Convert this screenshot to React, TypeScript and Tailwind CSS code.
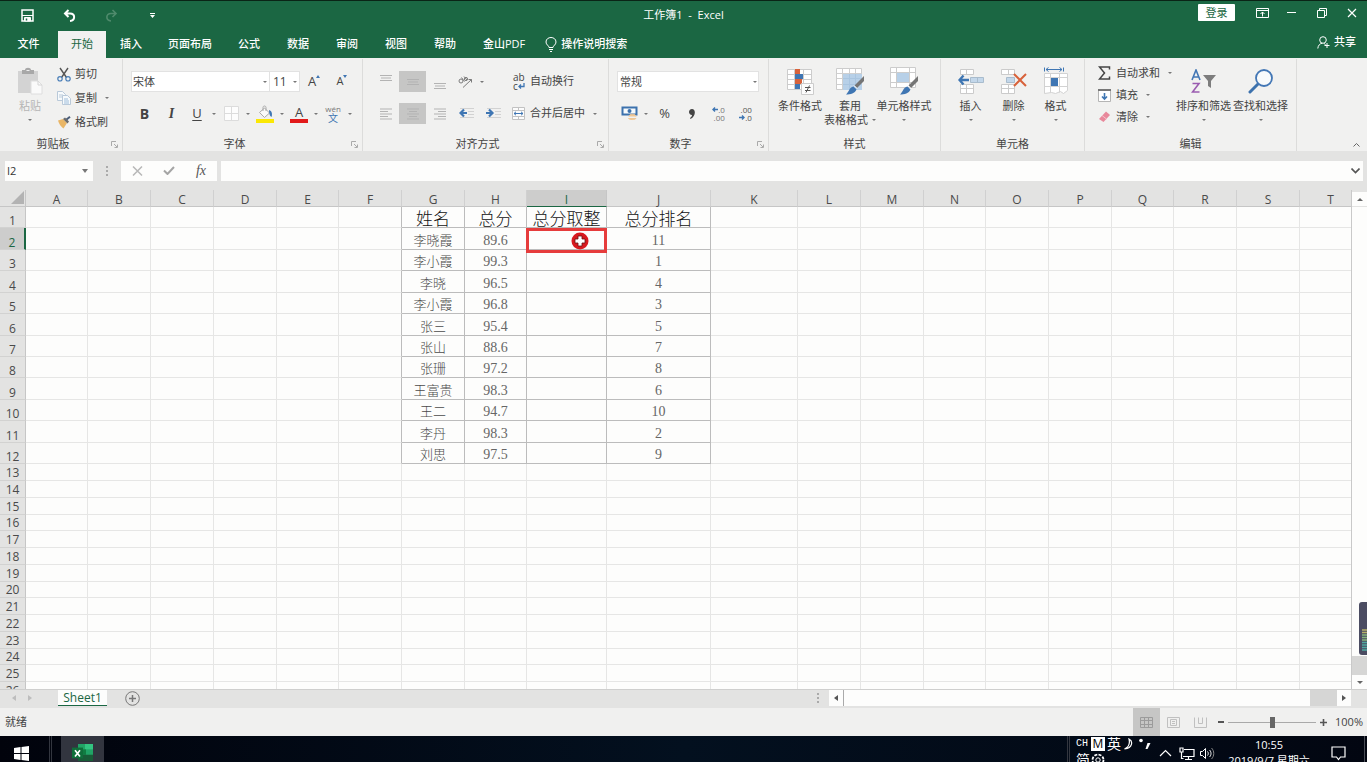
import type { ReactNode } from "react";
import clsx from "clsx";

const TABS = ["插入", "页面布局", "公式", "数据", "审阅", "视图", "帮助", "金山PDF"];

const COLUMNS = [
  { name: "A", width: "w-[62px]" },
  { name: "B", width: "w-[63px]" },
  { name: "C", width: "w-[63px]" },
  { name: "D", width: "w-[63px]" },
  { name: "E", width: "w-[62px]" },
  { name: "F", width: "w-[63px]" },
  { name: "G", width: "w-[63px]" },
  { name: "H", width: "w-[62px]" },
  { name: "I", width: "w-[80px]" },
  { name: "J", width: "w-[104px]" },
  { name: "K", width: "w-[87px]" },
  { name: "L", width: "w-[63px]" },
  { name: "M", width: "w-[63px]" },
  { name: "N", width: "w-[62px]" },
  { name: "O", width: "w-[63px]" },
  { name: "P", width: "w-[63px]" },
  { name: "Q", width: "w-[62px]" },
  { name: "R", width: "w-[63px]" },
  { name: "S", width: "w-[63px]" },
  { name: "T", width: "w-[62px]" },
];

const DATA: Record<string, string>[] = [
  { G: "姓名", H: "总分", I: "总分取整", J: "总分排名" },
  { G: "李晓霞", H: "89.6", J: "11" },
  { G: "李小霞", H: "99.3", J: "1" },
  { G: "李晓", H: "96.5", J: "4" },
  { G: "李小霞", H: "96.8", J: "3" },
  { G: "张三", H: "95.4", J: "5" },
  { G: "张山", H: "88.6", J: "7" },
  { G: "张珊", H: "97.2", J: "8" },
  { G: "王富贵", H: "98.3", J: "6" },
  { G: "王二", H: "94.7", J: "10" },
  { G: "李丹", H: "98.3", J: "2" },
  { G: "刘思", H: "97.5", J: "9" },
];

const ROWS = Array.from({ length: 26 }, (_, i) => i + 1);
const TALL_ROWS = [2, 4, 6, 9, 11];

function rowHeight(row: number) {
  if (row <= 12) return TALL_ROWS.includes(row) ? "h-[22px]" : "h-[21px]";
  return (row - 13) % 4 === 3 ? "h-[16px]" : "h-[17px]";
}

/* ---------- small pieces ---------- */

function Caret({ className }: { className?: string }) {
  return (
    <svg width="4" height="2" viewBox="0 0 4 2" className={clsx("shrink-0", className)} aria-hidden>
      <path d="M0 0h4L2 2z" fill="#777" />
    </svg>
  );
}

function Group({ label, launcher, className, children }: { label: string; launcher?: boolean; className: string; children: ReactNode }) {
  return (
    <section className={clsx("flex shrink-0 flex-col border-r border-[#dcdcdb]", className)} aria-label={label}>
      <div className="flex-1">{children}</div>
      <div className="flex h-[14px] items-center">
        <span className="flex-1 text-center leading-[14px]">{label}</span>
        {launcher ? (
          <button className="flex w-4 justify-center" aria-label={`${label}设置`}>
            <svg width="7" height="7" viewBox="0 0 7 7" fill="none" stroke="#aaa">
              <path d="M.5 5V.5H5M3 3l3 3M6.500 3.500v3h-3" />
            </svg>
          </button>
        ) : null}
      </div>
    </section>
  );
}

function Tool({ label, active, className, children }: { label: string; active?: boolean; className?: string; children: ReactNode }) {
  return (
    <button
      aria-label={label}
      className={clsx("flex h-[21px] shrink-0 items-center justify-center", className ?? "w-[27px]", active && "bg-[#c6c6c5]")}
    >
      {children}
    </button>
  );
}

function SplitTool({ label, children }: { label: string; children: ReactNode }) {
  return (
    <button aria-label={label} className="flex h-[21px] w-[34px] shrink-0 items-center">
      <span className="flex w-6 justify-center">{children}</span>
      <span className="flex w-[10px] justify-center">
        <Caret />
      </span>
    </button>
  );
}

function BigTool({ icon, lines, className, muted }: { icon: ReactNode; lines: string[]; className: string; muted?: boolean }) {
  return (
    <button className={clsx("flex shrink-0 flex-col items-center pt-2 leading-[14px]", className, muted && "text-[#b5b5b5]")}>
      <span className="mb-1 flex h-7 items-center">{icon}</span>
      <span className="whitespace-nowrap">{lines[0]}</span>
      {lines[1] ? (
        <span className="flex items-center gap-1 whitespace-nowrap">
          {lines[1]}
          <Caret />
        </span>
      ) : (
        <span className="flex h-[14px] items-center">
          <Caret />
        </span>
      )}
    </button>
  );
}

function LabeledTool({ icon, text, caret, className }: { icon: ReactNode; text: string; caret?: boolean; className: string }) {
  return (
    <button className={clsx("flex items-center whitespace-nowrap", className)}>
      <span className="flex w-[18px] justify-start">{icon}</span>
      {text}
      {caret ? <Caret className="ml-2" /> : null}
    </button>
  );
}

function AlignLines({ widths, align, top }: { widths: number[]; align: "left" | "center" | "right"; top: number }) {
  return (
    <svg width="14" height="14" viewBox="0 0 14 14" stroke="#b3b3b3" aria-hidden>
      {widths.map((w, i) => {
        const x = align === "left" ? 1 : align === "right" ? 13 - w : 7 - w / 2;
        const y = top + i * 2.5;
        return <path key={i} d={`M${x} ${y}h${w}`} />;
      })}
    </svg>
  );
}

/* ---------- icons ---------- */

function PasteIcon() {
  return (
    <svg width="26" height="28" viewBox="0 0 26 28" aria-hidden>
      <path d="M1 4h20v22H1z" fill="#d3d3d3" />
      <path d="M5 3h3c0-3 6-3 6 0h3v4H5z" fill="#a8a8a8" />
      <path d="M9.500 3.500h3" stroke="#eee" />
      <path d="M14 14h7l4 4v9H14z" fill="#fafafa" stroke="#dedede" />
      <path d="M21 14v4h4" fill="none" stroke="#d4d4d4" />
    </svg>
  );
}

function CutIcon() {
  return (
    <svg width="14" height="15" viewBox="0 0 14 15" fill="none" aria-hidden>
      <path d="M3 1l6.500 9.500M11 1L4.500 10.500" stroke="#555" strokeWidth="1.400" />
      <circle cx="3" cy="11.800" r="2.200" stroke="#4a7fb8" strokeWidth="1.200" />
      <circle cx="11" cy="11.800" r="2.200" stroke="#4a7fb8" strokeWidth="1.200" />
    </svg>
  );
}

function CopyIcon() {
  return (
    <svg width="15" height="14" viewBox="0 0 15 14" fill="#f7fafc" stroke="#b9c9d9" aria-hidden>
      <path d="M.5.5h5l3 3v6h-8z" />
      <path d="M2 4h4M2 6h4" />
      <path d="M5.500 4.500h5l3 3v6h-8z" />
      <path d="M7 8h4M7 10h5M7 12h5" stroke="#9dbcda" />
    </svg>
  );
}

function PainterIcon() {
  return (
    <svg width="14" height="13" viewBox="0 0 14 13" aria-hidden>
      <path d="M1 4.500l5-1.500 4 4-3.500 5.500C4 11 2 8 1 4.500z" fill="#e9b667" />
      <path d="M6 3l4.500 4.500 1.500-2L8 1.500z" fill="#6b6b6b" />
      <path d="M9.500 3.500L13 .8" stroke="#4a5c78" strokeWidth="2" />
    </svg>
  );
}

function BordersIcon() {
  return (
    <svg width="15" height="15" viewBox="0 0 15 15" fill="#fdfdfd" stroke="#dcdcdc" aria-hidden>
      <path d="M.5.5h14v14H.5zM7.500.5v14M.5 7.500h14" />
    </svg>
  );
}

function FillIcon() {
  return (
    <svg width="18" height="18" viewBox="0 0 18 18" aria-hidden>
      <path d="M3.500 7.500L8.500 3l5 5-5 4.500z" fill="#fafafa" stroke="#aaa" />
      <path d="M7 6V2.500c0-2 3-2 3 0V6" fill="none" stroke="#aaa" />
      <path d="M13 5c3 1 3.500 4 2.500 7-2-1-2.500-4-2.500-7z" fill="#3f78b5" />
      <path d="M0 14h18v4H0z" fill="#fbe805" />
    </svg>
  );
}

function CurrencyIcon() {
  return (
    <svg width="17" height="15" viewBox="0 0 17 15" aria-hidden>
      <path d="M1.500 1.500h14v7h-14z" fill="#f7fafc" stroke="#3c72ad" strokeWidth="2" />
      <circle cx="8.500" cy="5" r="2" fill="#3c72ad" />
      <path d="M8 10.500c0-3 7-3 7 0M7.500 12c0 2 7.500 2 7.500 0" fill="#f0c795" stroke="#f0c795" />
    </svg>
  );
}

function IndentIcon({ right }: { right?: boolean }) {
  return (
    <svg width="16" height="13" viewBox="0 0 16 13" fill="none" aria-hidden>
      <path d="M1 1.500h14M9 4.500h6M9 7.500h6M1 10.500h14" stroke="#d2d2d2" />
      <path d={right ? "M0 6h6M3 2.500L6.500 6 3 9.500" : "M2 6h6M5 2.500L1.500 6 5 9.500"} stroke="#3f76b3" strokeWidth="2.200" />
    </svg>
  );
}

function OrientationIcon() {
  return (
    <svg width="15" height="14" viewBox="0 0 15 14" fill="none" stroke="#7c7c7c" aria-hidden>
      <circle cx="3" cy="6" r="2" />
      <path d="M3.500 2.500l3 4M6 1.500l3 3.500" />
      <circle cx="8" cy="4" r="1.600" />
      <path d="M5 12.500l8.500-8M10.500 4.500h3v3" />
    </svg>
  );
}

function MergeIcon() {
  return (
    <svg width="13" height="13" viewBox="0 0 13 13" fill="none" aria-hidden>
      <path d="M.5.5h12v12H.5zM.5 3.500h12M.5 9.500h12M6.500.5v3M6.500 9.500v3" fill="#fcfcfc" stroke="#c2c2c2" />
      <path d="M2 6.500h9M4 4.800L2 6.500l2 1.700M9 4.800l2 1.700-2 1.700" stroke="#3f76b3" />
    </svg>
  );
}

function ConditionalIcon() {
  return (
    <svg width="27" height="27" viewBox="0 0 27 27" aria-hidden>
      <path d="M.5 1.500h24v20H.5zM.5 6.500h24M.5 11.500h24M.5 16.500h24M7.500 1.500v20M16.500 1.500v20" fill="#fff" stroke="#cccccc" />
      <path d="M8 1h5v5H8zM8 11h7v5H8z" fill="#d8623b" />
      <path d="M8 6h8v5H8zM8 16h5v5H8z" fill="#3f76b3" />
      <path d="M14.500 15.500h12v11h-12z" fill="#fcfcfc" stroke="#ccc" />
      <path d="M18 19.500h5.500M18 22.500h5.500M22.500 17.500l-3.500 7" stroke="#555" />
    </svg>
  );
}

function StyleBrush() {
  return (
    <>
      <path d="M28 9L18.500 18.500l2.500 2.500L28 14z" fill="#757575" />
      <path d="M17.500 19.500l3 3c-1.500 4-6 5-10.500 5 3-2.500 3-7 7.500-8z" fill="#3f76b3" />
      <path d="M18 18.500l3 3" stroke="#fff" />
    </>
  );
}

function TableStyleIcon() {
  return (
    <svg width="28" height="28" viewBox="0 0 28 28" aria-hidden>
      <path d="M.5 1.500h25v21H.5z" fill="#fff" stroke="#cccccc" />
      <path d="M7 7h19v16H7z" fill="#b7d0e8" />
      <path d="M.5 6.500h25M.5 11.500h6M.5 17.500h6M6.500 1.500v21M13.500 1.500v5M19.500 1.500v5" stroke="#cfcfcf" />
      <path d="M7 11.500h18.500M7 17.500h18.500M13.500 7v15.500M19.500 7v15.500" stroke="#a9c5e0" />
      <StyleBrush />
    </svg>
  );
}

function CellStyleIcon() {
  return (
    <svg width="28" height="28" viewBox="0 0 28 28" aria-hidden>
      <path d="M.5.5h25v20H.5zM.5 5.500h25M.5 15.500h25M6.500.5v20M19.500.5v20" fill="#fff" stroke="#cccccc" />
      <path d="M7 6h12v9H7z" fill="#b7d0e8" />
      <StyleBrush />
    </svg>
  );
}

function InsertIcon() {
  return (
    <svg width="26" height="27" viewBox="0 0 26 27" aria-hidden>
      <path d="M2.500 1.500h13v5h-13zM8.500 1.500v5M2.500 16.500h13v9h-13zM2.500 20.500h13M8.500 16.500v9" fill="#fff" stroke="#cbcbcb" />
      <path d="M12.500 9.500h13v5h-13zM19.500 9.500v5" fill="#c3d7ea" stroke="#a9bccd" />
      <path d="M1.500 12H11M5.500 7.500L1.500 12l4 4.500" fill="none" stroke="#3f76b3" strokeWidth="2.400" />
    </svg>
  );
}

function DeleteIcon() {
  return (
    <svg width="27" height="27" viewBox="0 0 27 27" aria-hidden>
      <path d="M1.500 1.500h13v5h-13zM8.500 1.500v5M1.500 16.500h13v9h-13zM1.500 20.500h13M8.500 16.500v9" fill="#fff" stroke="#cbcbcb" />
      <path d="M6.500 9.500h8v5h-8z" fill="#c3d7ea" stroke="#a9bccd" />
      <path d="M14 6l12 12M26 6L14 18" stroke="#d8623b" strokeWidth="2" />
    </svg>
  );
}

function FormatIcon() {
  return (
    <svg width="24" height="28" viewBox="0 0 24 28" aria-hidden>
      <path d="M2 2.500h16M4.500.5L2 2.500l2.500 2M15.500.5L18 2.500l-2.500 2M.5.500v4M19.500.500v4" fill="none" stroke="#3f76b3" />
      <path d="M.5 6.500h23v17l-4 3-3-2-5 2-4-1-7 1zM.5 10.500h23M.5 19.500h23M6.500 6.500v19M15.500 6.500v19" fill="#fff" stroke="#d2d2d2" />
      <path d="M7 11h7v8H7z" fill="#3f76b3" />
    </svg>
  );
}

function SortFilterIcon() {
  return (
    <svg width="25" height="25" viewBox="0 0 25 25" fill="none" aria-hidden>
      <path d="M1 11L5 1l4 10M2.500 8h5" stroke="#4377b5" strokeWidth="1.600" />
      <path d="M1.500 14.500h6.500l-6.500 8.500h7" stroke="#9a5cb0" strokeWidth="1.600" />
      <path d="M12 6h13l-5 6v7l-3-2v-5z" fill="#7d7d7d" />
    </svg>
  );
}

function FindIcon() {
  return (
    <svg width="26" height="26" viewBox="0 0 26 26" aria-hidden>
      <path d="M10 16l-8 8" stroke="#3d72ad" strokeWidth="3" strokeLinecap="round" />
      <circle cx="16" cy="10" r="8" fill="#f8fafb" stroke="#4377b5" strokeWidth="1.800" />
    </svg>
  );
}

/* ---------- window parts ---------- */

function TitleBar() {
  return (
    <header className="flex h-[31px] shrink-0 border-t border-[#0a2416] bg-[#1b6743] text-white">
      <div className="flex flex-1 items-center pb-[2px]">
        <button className="ml-[6px] flex w-[42px] justify-center" aria-label="保存">
          <svg width="13" height="13" viewBox="0 0 13 13">
            <path d="M1 1h11v11H1z" fill="none" stroke="#fff" strokeWidth="1.500" />
            <path d="M1 6.500h11M3.500 8.500h6V12h-6z" fill="#fff" stroke="#fff" />
            <path d="M5.500 9.500v2" stroke="#1b6743" strokeWidth="1.500" />
          </svg>
        </button>
        <button className="flex w-[42px] justify-center" aria-label="撤消">
          <svg width="13" height="13" viewBox="0 0 13 13" fill="none" stroke="#fff" strokeWidth="2">
            <path d="M5.500 1L2 4.500 5.500 8M2 4.500h5c5.500 0 5.500 7 0 7.500" />
          </svg>
        </button>
        <button className="flex w-[42px] justify-center" aria-label="恢复">
          <svg width="13" height="13" viewBox="0 0 13 13" fill="none" stroke="#4f8a6c" strokeWidth="1.600">
            <path d="M7.500 1L11 4.500 7.500 8M11 4.500H6c-5.500 0-5.500 7 0 7.500" />
          </svg>
        </button>
        <button className="flex w-10 justify-center" aria-label="自定义快速访问工具栏">
          <svg width="5" height="5" viewBox="0 0 5 5" fill="#fff">
            <path d="M0 0h5v1H0zM0 2h5L2.500 5z" />
          </svg>
        </button>
      </div>
      <h1 className="self-center whitespace-pre pb-[2px] leading-4">工作簿1  -  Excel</h1>
      <div className="flex h-6 flex-1 items-center justify-end pb-px">
        <button className="mr-3 h-[17px] w-[37px] rounded-[1px] bg-white leading-[17px] text-[#1b6743]">登录</button>
        <button className="flex w-[30px] justify-center" aria-label="功能区显示选项">
          <svg width="13" height="10" viewBox="0 0 13 10" fill="none" stroke="#fff">
            <path d="M.5.500h12v9H.5zM.5 2.500h12M6.500 8.500V4M4.500 6l2-2 2 2" />
          </svg>
        </button>
        <button className="flex w-[30px] justify-center" aria-label="最小化">
          <svg width="10" height="9" viewBox="0 0 10 9" stroke="#fff">
            <path d="M0 4.500h9" />
          </svg>
        </button>
        <button className="flex w-[30px] justify-center" aria-label="向下还原">
          <svg width="10" height="10" viewBox="0 0 10 10" fill="none" stroke="#fff">
            <path d="M.5 2.500h7v7h-7zM2.500 2.500v-2h7v7h-2" />
          </svg>
        </button>
        <button className="flex w-[30px] justify-center" aria-label="关闭">
          <svg width="10" height="10" viewBox="0 0 10 10" stroke="#fff" strokeWidth="1.200">
            <path d="M1 1l8 8M9 1L1 9" />
          </svg>
        </button>
      </div>
    </header>
  );
}

function TabBar() {
  return (
    <nav className="flex h-[27px] shrink-0 items-stretch gap-px bg-[#1b6743] font-medium text-white">
      <button className="w-[57px]">文件</button>
      <button className="bg-[#f1f1f0] px-[13px] font-normal text-[#1b6743]">开始</button>
      {TABS.map((tab) => (
        <button key={tab} className={clsx("whitespace-nowrap", tab.length === 4 ? "px-3" : "px-[13px]")}>
          {tab}
        </button>
      ))}
      <button className="flex items-center gap-1 px-[6px]">
        <svg width="12" height="15" viewBox="0 0 12 15" fill="none" stroke="#fff">
          <path d="M4 10.500c0-2-3-2.500-3-5.500 0-6 10-6 10 0 0 3-3 3.500-3 5.500zM4 12.500h4M5 14.500h2" />
        </svg>
        操作说明搜索
      </button>
      <button className="ml-auto flex items-center gap-1 pb-1 pr-[11px]">
        <svg width="13" height="13" viewBox="0 0 13 13" fill="none" stroke="#fff">
          <circle cx="6" cy="4" r="3.300" />
          <path d="M.8 12.500c.3-3 2-5 4.500-5.300M7 7.500l1.500 1M10 7v5M7.500 9.500h5" />
        </svg>
        共享
      </button>
    </nav>
  );
}

function Ribbon() {
  return (
    <div className="flex h-[93px] shrink-0 bg-[#f1f1f0] pt-px text-[#444]">
      <Group label="剪贴板" launcher className="w-[123px]">
        <div className="flex">
          <BigTool icon={<PasteIcon />} lines={["粘贴"]} className="ml-1 w-[52px]" muted />
          <div className="flex flex-col items-start pl-px pt-[3px]">
            <LabeledTool icon={<CutIcon />} text="剪切" className="h-6" />
            <LabeledTool icon={<CopyIcon />} text="复制" caret className="h-6" />
            <LabeledTool icon={<PainterIcon />} text="格式刷" className="h-6" />
          </div>
        </div>
      </Group>

      <Group label="字体" launcher className="w-[240px]">
        <div className="flex flex-col gap-[11px] pl-2 pt-3">
          <div className="flex">
            <div className="relative w-[139px]">
              <select aria-label="字体名称" className="h-[21px] w-full appearance-none border border-[#e2e2e2] bg-white px-px pt-px">
                <option>宋体</option>
              </select>
              <Caret className="pointer-events-none absolute right-[3px] top-[10px]" />
            </div>
            <div className="relative w-[30px]">
              <select aria-label="字号" className="h-[21px] w-full appearance-none border border-l-0 border-[#e2e2e2] bg-white px-[3px] pt-px text-xs">
                <option>11</option>
              </select>
              <Caret className="pointer-events-none absolute right-[3px] top-[10px]" />
            </div>
            <Tool label="增大字号" className="w-7">
              <span className="text-[13px]">A</span>
              <svg width="4" height="3" viewBox="0 0 4 3" className="mt-1 self-start" fill="#3f76b3">
                <path d="M0 3h4L2 0z" />
              </svg>
            </Tool>
            <Tool label="减小字号" className="w-7">
              <span className="text-[11px]">A</span>
              <svg width="4" height="3" viewBox="0 0 4 3" className="mt-1 self-start" fill="#3f76b3">
                <path d="M0 0h4L2 3z" />
              </svg>
            </Tool>
          </div>
          <div className="flex text-sm">
            <Tool label="加粗">
              <b>B</b>
            </Tool>
            <Tool label="倾斜">
              <i className="font-['Liberation_Serif',serif] font-bold">I</i>
            </Tool>
            <SplitTool label="下划线">
              <span className="text-[13px] underline underline-offset-2">U</span>
            </SplitTool>
            <SplitTool label="边框">
              <BordersIcon />
            </SplitTool>
            <SplitTool label="填充颜色">
              <FillIcon />
            </SplitTool>
            <SplitTool label="字体颜色">
              <span className="flex w-[18px] flex-col items-center border-b-4 border-[#e21a1a] text-[13px] leading-[14px]">A</span>
            </SplitTool>
            <SplitTool label="拼音指南">
              <span className="flex flex-col items-center text-[8px] leading-[8px] text-[#777]">
                <span>wén</span>
                <span className="text-[10px] leading-[10px] text-[#3f76b3]">文</span>
              </span>
            </SplitTool>
          </div>
        </div>
      </Group>

      <Group label="对齐方式" launcher className="w-[246px]">
        <div className="flex flex-col gap-[11px] pl-[9px] pt-3">
          <div className="flex">
            <div className="flex w-[140px]">
              <Tool label="顶端对齐">
                <AlignLines widths={[12, 10, 12]} align="center" top={0.5} />
              </Tool>
              <Tool label="垂直居中" active>
                <AlignLines widths={[12, 10, 12]} align="center" top={4.5} />
              </Tool>
              <Tool label="底端对齐">
                <AlignLines widths={[12, 10, 12]} align="center" top={8.5} />
              </Tool>
              <SplitTool label="方向">
                <OrientationIcon />
              </SplitTool>
            </div>
            <LabeledTool
              icon={
                <span className="flex flex-col items-start pl-px text-[10px] leading-[9px]">
                  <span>ab</span>
                  <span className="flex items-center">
                    c
                    <svg width="7" height="6" viewBox="0 0 7 6" fill="none" stroke="#3f76b3" strokeWidth="1.300">
                      <path d="M6 0v3.500H1M3 1.500l-2 2 2 2" />
                    </svg>
                  </span>
                </span>
              }
              text="自动换行"
              className="h-[21px]"
            />
          </div>
          <div className="flex">
            <div className="flex w-[140px]">
              <Tool label="左对齐">
                <AlignLines widths={[12, 8, 12, 8, 12]} align="left" top={2} />
              </Tool>
              <Tool label="居中" active>
                <AlignLines widths={[12, 8, 12, 8, 12]} align="center" top={2} />
              </Tool>
              <Tool label="右对齐">
                <AlignLines widths={[12, 8, 12, 8, 12]} align="right" top={2} />
              </Tool>
              <Tool label="减少缩进量">
                <IndentIcon />
              </Tool>
              <Tool label="增加缩进量">
                <IndentIcon right />
              </Tool>
            </div>
            <LabeledTool icon={<MergeIcon />} text="合并后居中" caret className="h-[21px]" />
          </div>
        </div>
      </Group>

      <Group label="数字" launcher className="w-[160px]">
        <div className="flex flex-col gap-[11px] pl-2 pt-3">
          <div className="relative w-[142px]">
            <select aria-label="数字格式" className="h-[21px] w-full appearance-none border border-[#e2e2e2] bg-white px-[2px] pt-px">
              <option>常规</option>
            </select>
            <Caret className="pointer-events-none absolute right-[2px] top-[10px]" />
          </div>
          <div className="flex">
            <SplitTool label="会计数字格式">
              <CurrencyIcon />
            </SplitTool>
            <Tool label="百分比样式">
              <span className="text-[13px]">%</span>
            </Tool>
            <Tool label="千位分隔样式">
              <svg width="6" height="10" viewBox="0 0 6 10" fill="#444">
                <path d="M3 0c4 0 4 7-1.500 10L1 9c1.500-1 2-2 2-3-4 0-4-6 0-6z" />
              </svg>
            </Tool>
            <Tool label="增加小数位数">
              <span className="flex flex-col items-end text-[8px] leading-[8px] text-[#777]">
                <span className="flex items-center">
                  <svg width="6" height="5" viewBox="0 0 6 5" fill="none" stroke="#3f76b3" strokeWidth="1.400">
                    <path d="M1 2.500h5M3 .5l-2 2 2 2" />
                  </svg>
                  .0
                </span>
                <span>.00</span>
              </span>
            </Tool>
            <Tool label="减少小数位数">
              <span className="flex flex-col items-end text-[8px] leading-[8px] text-[#555]">
                <span>.00</span>
                <span className="flex items-center">
                  <svg width="6" height="5" viewBox="0 0 6 5" fill="none" stroke="#3f76b3" strokeWidth="1.400">
                    <path d="M0 2.500h5M3 .5l2 2-2 2" />
                  </svg>
                  .0
                </span>
              </span>
            </Tool>
          </div>
        </div>
      </Group>

      <Group label="样式" className="w-[172px]">
        <div className="flex pl-[6px]">
          <BigTool icon={<ConditionalIcon />} lines={["条件格式"]} className="w-[50px]" />
          <BigTool icon={<TableStyleIcon />} lines={["套用", "表格格式"]} className="w-[50px]" />
          <BigTool icon={<CellStyleIcon />} lines={["单元格样式"]} className="w-[58px]" />
        </div>
      </Group>

      <Group label="单元格" className="w-36">
        <div className="flex pl-2">
          <BigTool icon={<InsertIcon />} lines={["插入"]} className="w-[43px]" />
          <BigTool icon={<DeleteIcon />} lines={["删除"]} className="w-[43px]" />
          <BigTool icon={<FormatIcon />} lines={["格式"]} className="w-[41px]" />
        </div>
      </Group>

      <Group label="编辑" className="w-[212px]">
        <div className="flex">
          <div className="flex w-[90px] flex-col items-start pl-[13px] pt-[3px]">
            <LabeledTool
              icon={
                <svg width="13" height="14" viewBox="0 0 13 14" fill="none" stroke="#444" strokeWidth="1.500">
                  <path d="M11.500 3.500V1H1.500l5 6-5 6h10v-2.500" />
                </svg>
              }
              text="自动求和"
              caret
              className="h-[22px]"
            />
            <LabeledTool
              icon={
                <svg width="13" height="13" viewBox="0 0 13 13" fill="none">
                  <path d="M.5.500h12v12H.5z" fill="#fff" stroke="#b5b5b5" />
                  <path d="M0 1h13" stroke="#777" strokeWidth="2" />
                  <path d="M6.500 4v6M4 7.500L6.500 10 9 7.500" stroke="#3f76b3" strokeWidth="1.600" />
                </svg>
              }
              text="填充"
              caret
              className="h-[22px]"
            />
            <LabeledTool
              icon={
                <svg width="13" height="12" viewBox="0 0 13 12">
                  <path d="M8 .5L12 4 5.500 11 1 8z" fill="#e8889b" />
                  <path d="M4 4.500L8.500 8" stroke="#f5c3cd" />
                </svg>
              }
              text="清除"
              caret
              className="h-[22px]"
            />
          </div>
          <BigTool icon={<SortFilterIcon />} lines={["排序和筛选"]} className="w-[57px]" />
          <BigTool icon={<FindIcon />} lines={["查找和选择"]} className="w-[57px]" />
        </div>
      </Group>

      <button className="ml-auto flex w-[22px] items-end justify-center pb-1" aria-label="折叠功能区">
        <svg width="7" height="5" viewBox="0 0 7 5" fill="none" stroke="#666">
          <path d="M.5 4.500l3-3 3 3" />
        </svg>
      </button>
    </div>
  );
}

function FormulaBar() {
  return (
    <div className="flex h-[39px] shrink-0 items-center bg-[#e3e3e2] pl-[5px] pr-1">
      <div className="relative w-[88px]">
        <input aria-label="名称框" defaultValue="I2" className="h-5 w-full bg-[#fdfdfc] px-[2px] text-[#333]" />
        <svg width="6" height="4" viewBox="0 0 6 4" fill="#777" className="pointer-events-none absolute right-[5px] top-2">
          <path d="M0 0h6L3 4z" />
        </svg>
      </div>
      <svg width="28" height="10" viewBox="0 0 28 10" fill="#aaa" aria-hidden>
        <path d="M13 0h2v2h-2zM13 4h2v2h-2zM13 8h2v2h-2z" />
      </svg>
      <div className="flex h-5 w-24 items-center bg-[#fdfdfc]">
        <button className="flex w-8 justify-center" aria-label="取消">
          <svg width="11" height="10" viewBox="0 0 11 10" stroke="#b8b8b8" strokeWidth="1.500">
            <path d="M1 .5l9 9M10 .5l-9 9" />
          </svg>
        </button>
        <button className="flex w-8 justify-center" aria-label="输入">
          <svg width="12" height="9" viewBox="0 0 12 9" fill="none" stroke="#a5a5a5" strokeWidth="2">
            <path d="M1 4.500L4.500 8 11 1" />
          </svg>
        </button>
        <button className="w-8 font-['Liberation_Serif',serif] text-sm italic leading-5 text-[#555]" aria-label="插入函数">
          fx
        </button>
      </div>
      <div className="relative ml-1 flex-1">
        <input aria-label="编辑栏" className="h-5 w-full bg-[#fdfdfc] px-1" />
        <svg width="9" height="6" viewBox="0 0 9 6" fill="none" stroke="#555" strokeWidth="1.600" className="absolute right-[3px] top-[7px]">
          <path d="M.5.500l4 4 4-4" />
        </svg>
      </div>
    </div>
  );
}

function SelectionFrame() {
  return (
    <div className="pointer-events-none absolute -bottom-1 -left-px -right-px top-0 border-[3px] border-[#e63c3c]">
      <svg width="18" height="18" viewBox="0 0 18 18" className="absolute left-[42px] top-px" aria-hidden>
        <circle cx="9" cy="9" r="8.500" fill="#d8191f" />
        <path d="M7 4h4v3h3v4h-3v3H7v-3H4V7h3z" fill="#fff" stroke="#6b1013" strokeWidth=".8" />
      </svg>
    </div>
  );
}

function Cell({ row, col }: { row: number; col: string }) {
  const inData = row <= DATA.length;
  const value = inData ? DATA[row - 1][col] : undefined;
  const bordered = inData && ["G", "H", "I", "J"].includes(col);
  const selected = row === 2 && col === "I";

  return (
    <td
      className={clsx(
        "border-b border-r p-0 text-center align-bottom",
        bordered ? "border-[#bcbcbc]" : "border-b-[#e6e6e5]",
        !bordered && (inData && col === "F" ? "border-r-[#bcbcbc]" : "border-r-[#e6e6e5]"),
        row === 1 && "font-['Liberation_Serif','Noto_Sans_CJK_SC',serif] text-[17px] font-light leading-[14px] text-[#111]",
        row > 1 && col === "G" && "font-['Liberation_Serif','Noto_Sans_CJK_SC',serif] text-[13px] font-light leading-4",
        row > 1 && col !== "G" && "font-['Liberation_Serif',serif] text-sm leading-4 text-[#666]",
        selected && "relative",
      )}
    >
      {value}
      {selected ? <SelectionFrame /> : null}
    </td>
  );
}

function Sheet() {
  return (
    <main className="flex min-h-0 flex-1 bg-[#e3e3e2]">
      <div className="min-w-0 flex-1 overflow-hidden border-r border-[#c9c9c9]">
        <table className="w-[1362px] table-fixed border-separate border-spacing-0 bg-[#fdfdfc] text-[#4a4a4a]">
          <colgroup>
            <col className="w-[26px]" />
            {COLUMNS.map((c) => (
              <col key={c.name} className={c.width} />
            ))}
          </colgroup>
          <thead>
            <tr className="h-[17px] bg-[#e3e3e2] text-xs">
              <th className="border-b border-r border-[#c6c6c6] p-0" aria-label="全选">
                <svg width="14" height="14" viewBox="0 0 14 14" className="ml-auto" fill="#b3b3b3">
                  <path d="M13 0v13H0z" />
                </svg>
              </th>
              {COLUMNS.map((c) => (
                <th
                  key={c.name}
                  scope="col"
                  className={clsx(
                    "border-b border-r p-0 align-bottom font-normal leading-3",
                    c.name === "I" ? "border-b-[#1b6743] border-r-[#c6c6c6] bg-[#cdcdcc] text-[#1b6743]" : "border-b-[#c6c6c6] border-r-[#d0d0d0]",
                  )}
                >
                  {c.name}
                </th>
              ))}
            </tr>
          </thead>
          <tbody>
            {ROWS.map((row) => (
              <tr key={row} className={rowHeight(row)}>
                <th
                  scope="row"
                  className={clsx(
                    "border-b border-b-[#d2d2d1] p-0 align-bottom text-xs font-normal",
                    row <= 12 ? "leading-3" : "leading-[14px]",
                    row === 2 ? "border-r-2 border-r-[#1b6743] bg-[#cdcdcc] text-[#1b6743]" : "border-r border-r-[#c6c6c6] bg-[#e3e3e2]",
                  )}
                >
                  {row}
                </th>
                {COLUMNS.map((c) => (
                  <Cell key={c.name} row={row} col={c.name} />
                ))}
              </tr>
            ))}
          </tbody>
        </table>
      </div>

      <div className="relative flex w-[15px] shrink-0 flex-col pt-[2px]">
        <button className="flex h-[14px] items-center justify-center bg-[#fdfdfc]" aria-label="向上滚动">
          <svg width="6" height="3" viewBox="0 0 6 3" fill="#666">
            <path d="M0 3h6L3 0z" />
          </svg>
        </button>
        <div className="mt-px flex-1 bg-[#fdfdfc]" />
        <div className="h-[19px] bg-[#d6d6d5]" />
        <button className="flex h-[14px] items-center justify-center bg-[#fdfdfc]" aria-label="向下滚动">
          <svg width="6" height="3" viewBox="0 0 6 3" fill="#666">
            <path d="M0 0h6L3 3z" />
          </svg>
        </button>
        {/* volume meter docked on the screen edge */}
        <div className="absolute bottom-[34px] right-0 h-[53px] w-2 rounded-l-[3px] bg-[#4b4c62] pl-[3px] pt-[27px]">
          <svg width="5" height="22" viewBox="0 0 5 22" strokeWidth="1.400">
            <path d="M0 1h5M0 3.500h5" stroke="#b5b06a" />
            <path d="M0 6h5M0 8.500h5M0 11h5" stroke="#86b57c" />
            <path d="M0 13.500h5M0 16h5M0 18.500h5M0 21h5" stroke="#4fa8a0" />
          </svg>
        </div>
      </div>
    </main>
  );
}

function SheetTabs() {
  return (
    <div className="flex h-[19px] shrink-0 border-t border-[#cfcfce] bg-[#e3e3e2]">
      <div className="flex h-4 w-[58px] items-center gap-3 pl-3">
        <button aria-label="上一个工作表">
          <svg width="4" height="6" viewBox="0 0 4 6" fill="#bdbdbd">
            <path d="M4 0v6L0 3z" />
          </svg>
        </button>
        <button aria-label="下一个工作表">
          <svg width="4" height="6" viewBox="0 0 4 6" fill="#bdbdbd">
            <path d="M0 0v6l4-3z" />
          </svg>
        </button>
      </div>
      <button className="h-4 w-[49px] border-b border-[#1b6743] bg-[#fdfdfc] text-xs leading-[14px] text-[#1b6743]">Sheet1</button>
      <button className="ml-[18px] flex h-4 items-center" aria-label="新工作表">
        <svg width="15" height="15" viewBox="0 0 15 15" fill="none" stroke="#777">
          <circle cx="7.500" cy="7.500" r="6.800" />
          <path d="M7.500 4v7M4 7.500h7" strokeWidth="1.500" />
        </svg>
      </button>
      <svg width="3" height="11" viewBox="0 0 3 11" fill="#aaa" className="ml-auto mr-[9px] mt-[3px]" aria-hidden>
        <path d="M0 0h2v2H0zM0 4h2v2H0zM0 8h2v2H0z" />
      </svg>
      <div className="flex h-4 w-[522px]">
        <button className="flex w-[15px] items-center justify-center border-r border-[#aaa] bg-[#fdfdfc]" aria-label="向左滚动">
          <svg width="4" height="6" viewBox="0 0 4 6" fill="#555">
            <path d="M4 0v6L0 3z" />
          </svg>
        </button>
        <div className="flex-1 bg-[#fdfdfc]" />
        <div className="w-[27px] bg-[#d6d6d5]" />
        <button className="flex w-[14px] items-center justify-center bg-[#fdfdfc]" aria-label="向右滚动">
          <svg width="4" height="6" viewBox="0 0 4 6" fill="#555">
            <path d="M0 0v6l4-3z" />
          </svg>
        </button>
      </div>
      <div className="w-4" />
    </div>
  );
}

function StatusBar() {
  return (
    <div className="flex h-7 shrink-0 items-center bg-[#f0f0ef] pl-[5px] pr-1 text-[#444]">
      <span className="pb-px leading-4">就绪</span>
      <div className="ml-auto flex h-full">
        <button className="flex w-[27px] items-center justify-center bg-[#c6c6c5]" aria-label="普通">
          <svg width="13" height="11" viewBox="0 0 13 11" fill="none" stroke="#9b9b9b">
            <path d="M.5.500h12v10H.5zM.5 3.500h12M.5 7.500h12M4.500.500v10M8.500.500v10" />
          </svg>
        </button>
        <button className="flex w-[27px] items-center justify-center" aria-label="页面布局视图">
          <svg width="13" height="11" viewBox="0 0 13 11" fill="none" stroke="#c0c0c0">
            <path d="M.5.500h12v10H.5zM3.500 2.500h6v6h-6zM5 4.500h3M5 6.500h3" />
          </svg>
        </button>
        <button className="flex w-[27px] items-center justify-center" aria-label="分页预览">
          <svg width="13" height="11" viewBox="0 0 13 11" fill="none" stroke="#c0c0c0">
            <path d="M.5.500v10h12V.500M4.500.500v6h4v-6" />
          </svg>
        </button>
      </div>
      <button className="flex w-[14px] justify-center" aria-label="缩小">
        <svg width="6" height="2" viewBox="0 0 6 2" fill="#555">
          <path d="M0 0h6v2H0z" />
        </svg>
      </button>
      <input
        type="range"
        aria-label="缩放"
        min={0}
        max={200}
        defaultValue={100}
        className="h-3 w-[88px] appearance-none bg-[linear-gradient(#a9a9a9,#a9a9a9)] bg-[length:100%_1px] bg-center bg-no-repeat [&::-webkit-slider-thumb]:h-[11px] [&::-webkit-slider-thumb]:w-[5px] [&::-webkit-slider-thumb]:appearance-none [&::-webkit-slider-thumb]:bg-[#666]"
      />
      <button className="flex w-[14px] justify-center" aria-label="放大">
        <svg width="7" height="7" viewBox="0 0 7 7" stroke="#555" strokeWidth="1.600">
          <path d="M0 3.500h7M3.500 0v7" />
        </svg>
      </button>
      <span className="w-[33px] pb-px text-right leading-4">100%</span>
    </div>
  );
}

function Taskbar() {
  return (
    <footer className="h-[26px] shrink-0 overflow-hidden bg-[linear-gradient(90deg,#01030c,#03101f_50%,#020611)] text-white">
      <div className="flex h-[34px] items-center">
        <button className="ml-[14px] flex" aria-label="开始">
          <svg width="15" height="15" viewBox="0 0 15 15" fill="#fff">
            <path d="M0 2l6.500-1v6H0zM7.500.900L15 0v7H7.500zM0 8h6.500v6L0 13zM7.500 8H15v7l-7.500-1z" />
          </svg>
        </button>
        <div className="ml-5 h-full w-[3px] border-x border-[#33363f]" />
        <button className="ml-[9px] flex h-full w-[43px] items-center justify-center bg-[#32353f] pb-[2px]" aria-label="Excel">
          <svg width="21" height="17" viewBox="0 0 21 19" preserveAspectRatio="none">
            <path d="M6 0h15v19H6z" fill="#21a366" />
            <path d="M13 0h8v6h-8z" fill="#33c481" />
            <path d="M6 6h8v6H6z" fill="#107c41" />
            <path d="M6 12h15v7H6z" fill="#185c37" />
            <path d="M0 4h11v12H0z" fill="#0f6e3a" />
            <path d="M3 7l5 7M8 7l-5 7" stroke="#fff" strokeWidth="1.600" />
          </svg>
        </button>

        <div className="ml-auto h-full w-[3px] border-x border-[#33363f]" />
        <div className="ml-[6px] flex w-20 flex-col self-start">
          <div className="flex h-4 items-center gap-px">
            <span className="w-[14px] font-['Liberation_Mono',monospace] text-[10px] leading-4">CH</span>
            <span className="h-[14px] w-[14px] bg-white text-center text-xs leading-[14px] text-black">M</span>
            <span className="pl-px text-sm leading-4">英</span>
            <svg width="14" height="13" viewBox="0 0 14 13" fill="none" stroke="#fff" strokeWidth="1.200">
              <path d="M7 1c4 2 4 9-4.500 10C7 9 8 5 7 1z" />
            </svg>
            <svg width="14" height="12" viewBox="0 0 14 12" fill="#fff">
              <circle cx="4" cy="2.500" r="1.800" />
              <path d="M10.500 5h3l-3 6h-2z" />
            </svg>
          </div>
          <div className="flex h-4 items-center gap-px">
            <span className="text-sm leading-4">简</span>
            <svg width="14" height="14" viewBox="0 0 14 14" fill="none" stroke="#fff">
              <circle cx="7" cy="7" r="5.500" strokeWidth="1.800" strokeDasharray="3 1.300" />
              <circle cx="7" cy="7" r="2.200" />
            </svg>
          </div>
        </div>
        <button className="ml-[3px] flex" aria-label="显示隐藏的图标">
          <svg width="13" height="8" viewBox="0 0 13 8" fill="none" stroke="#fff" strokeWidth="1.200">
            <path d="M1 7l5.500-5.500L12 7" />
          </svg>
        </button>
        <button className="ml-[7px] flex" aria-label="网络">
          <svg width="16" height="13" viewBox="0 0 16 13" fill="none" stroke="#fff" strokeWidth="1.200">
            <path d="M5 2.500h10v7H4M9.500 9.500v3M6 12.500h7M1 1h3v4H1zM2.500 5v6.500h2" />
          </svg>
        </button>
        <button className="ml-[5px] flex" aria-label="音量">
          <svg width="15" height="13" viewBox="0 0 15 13" fill="none" stroke="#fff">
            <path d="M.5 4.500h2l3-3v10l-3-3h-2zM7.500 4.500c1 1 1 3 0 4M9.500 3c2 2 2 5 0 7" />
            <path d="M11.500 1c3 3 3 8 0 11" stroke="#888" />
          </svg>
        </button>
        <div className="ml-3 flex w-[84px] flex-col self-start whitespace-nowrap pt-px text-center leading-4">
          <time>10:55</time>
          <span>2019/9/7 星期六</span>
        </div>
        <button className="ml-5 flex" aria-label="通知">
          <svg width="15" height="15" viewBox="0 0 15 15" fill="none" stroke="#fff" strokeWidth="1.200">
            <path d="M1 1h13v10H9.500L7.500 13.500 5.500 11H1z" />
          </svg>
        </button>
        <div className="ml-[18px] mr-[2px] h-full w-px bg-[#4a4d55]" />
      </div>
    </footer>
  );
}

export default function App() {
  return (
    <div className="flex h-screen flex-col overflow-hidden bg-[#e3e3e2] font-['Open_Sans','Noto_Sans_CJK_SC',sans-serif] text-[11px]">
      <TitleBar />
      <TabBar />
      <Ribbon />
      <FormulaBar />
      <Sheet />
      <SheetTabs />
      <StatusBar />
      <Taskbar />
    </div>
  );
}
